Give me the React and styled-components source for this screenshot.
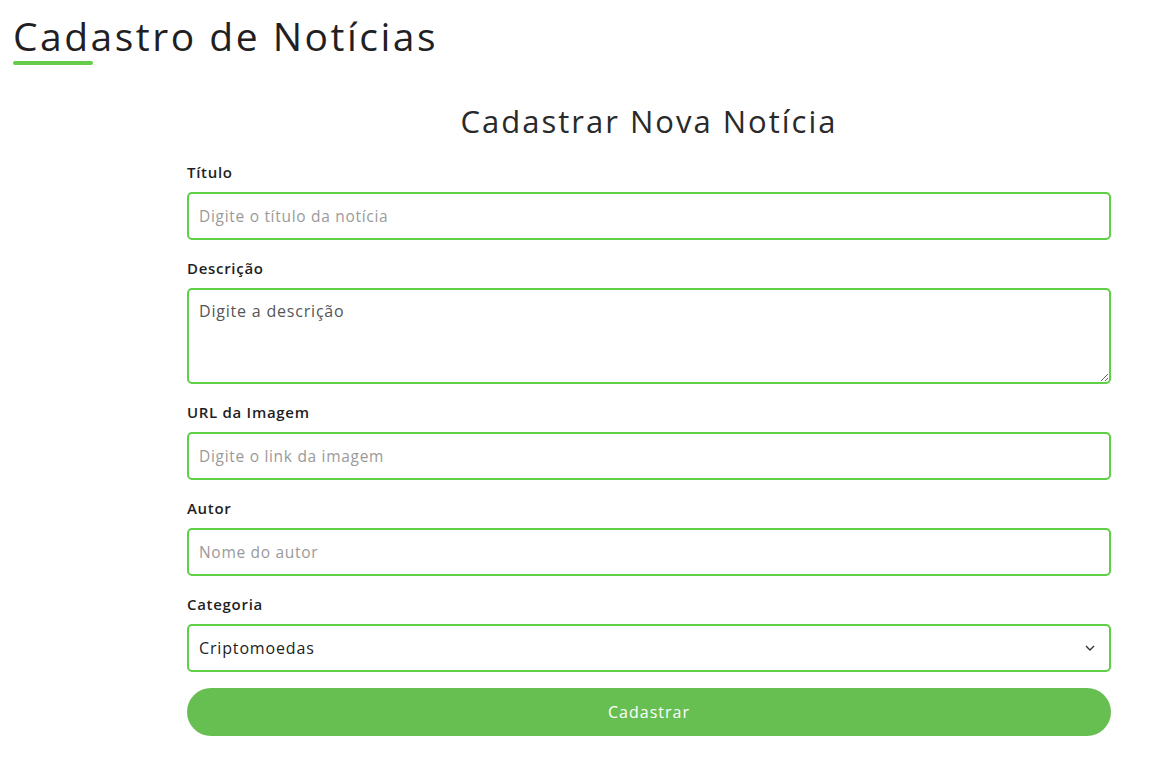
import React, { useState } from "react";
import styled, { createGlobalStyle } from "styled-components";

const GlobalStyle = createGlobalStyle`
    body {
        margin: 0;
        background: #ffffff;
        font-family: "Open Sans", "Noto Sans", sans-serif;
        color: #222222;
    }
`;

const Page = styled.div`
    padding: 8px 0 0 13px;
`;

const PageTitle = styled.h1`
    margin: 0;
    font-size: 39px;
    font-weight: 500;
    line-height: 56px;
    color: #1f1f24;
    letter-spacing: 2.5px;
`;

const Underline = styled.div`
    width: 80px;
    height: 4px;
    border-radius: 2px;
    background-color: #66cc4a;
    margin-top: -3px;
`;

const FormBox = styled.form`
    width: 924px;
    margin: 36px 0 0 174px;
    display: flex;
    flex-direction: column;
`;

const FormTitle = styled.h2`
    margin: 0 0 19px;
    text-align: center;
    font-size: 31px;
    font-weight: 500;
    line-height: 40px;
    color: #2a2a2a;
    letter-spacing: 2px;
`;

const Field = styled.div`
    display: flex;
    flex-direction: column;
    margin-bottom: 16px;
`;

const Label = styled.label`
    font-size: 15px;
    font-weight: 600;
    line-height: 24px;
    margin-bottom: 8px;
    color: #1f1f1f;
    letter-spacing: 0.7px;
`;

const inputBase = `
    box-sizing: border-box;
    width: 100%;
    border: 2px solid #5fcf48;
    border-radius: 5px;
    padding: 0 10px;
    font-family: "Open Sans", "Noto Sans", sans-serif;
    color: #333333;
    background: #ffffff;
    outline: none;
`;

const Input = styled.input`
    ${inputBase}
    height: 48px;
    font-size: 15.5px;
    letter-spacing: 0.7px;
    &::placeholder {
        color: #9a9a9a;
    }
`;

const TextArea = styled.textarea`
    ${inputBase}
    height: 96px;
    padding: 9px 10px;
    font-size: 16px;
    letter-spacing: 0.8px;
    line-height: 24px;
    &::placeholder {
        color: #555555;
    }
`;

const SelectWrap = styled.div`
    position: relative;
`;

const Select = styled.select`
    ${inputBase}
    height: 48px;
    appearance: none;
    font-size: 16px;
    letter-spacing: 0.85px;
    color: #222222;
`;

const Chevron = styled.svg`
    position: absolute;
    right: 16px;
    top: 19px;
    pointer-events: none;
`;

const Button = styled.button`
    height: 48px;
    border: none;
    border-radius: 24px;
    background-color: #67bf52;
    color: #ffffff;
    font-family: "Open Sans", "Noto Sans", sans-serif;
    font-size: 16px;
    letter-spacing: 1px;
    cursor: pointer;
`;

const App = () => {
    const [categoria, setCategoria] = useState("Criptomoedas");

    return (
        <Page>
            <GlobalStyle />
            <PageTitle>Cadastro de Notícias</PageTitle>
            <Underline />
            <FormBox onSubmit={(e) => e.preventDefault()}>
                <FormTitle>Cadastrar Nova Notícia</FormTitle>
                <Field>
                    <Label>Título</Label>
                    <Input type="text" placeholder="Digite o título da notícia" />
                </Field>
                <Field>
                    <Label>Descrição</Label>
                    <TextArea placeholder="Digite a descrição" />
                </Field>
                <Field>
                    <Label>URL da Imagem</Label>
                    <Input type="text" placeholder="Digite o link da imagem" />
                </Field>
                <Field>
                    <Label>Autor</Label>
                    <Input type="text" placeholder="Nome do autor" />
                </Field>
                <Field>
                    <Label>Categoria</Label>
                    <SelectWrap>
                        <Select
                            value={categoria}
                            onChange={(e) => setCategoria(e.target.value)}
                        >
                            <option>Criptomoedas</option>
                            <option>Tecnologia</option>
                            <option>Economia</option>
                        </Select>
                        <Chevron width="10" height="10" viewBox="0 0 10 10">
                            <path d="M1 3 L5 7 L9 3" fill="none" stroke="#333" strokeWidth="1.4" />
                        </Chevron>
                    </SelectWrap>
                </Field>
                <Button type="submit">Cadastrar</Button>
            </FormBox>
        </Page>
    );
};

export default App;
